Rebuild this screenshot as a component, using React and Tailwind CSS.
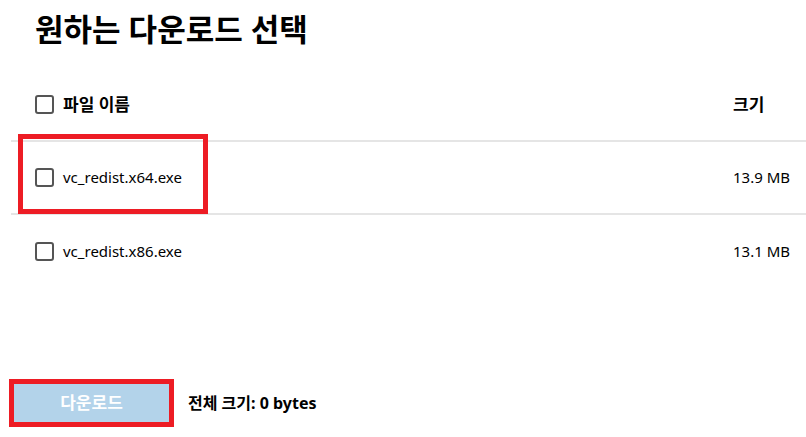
import * as React from "react";

function Box() {
  return (
    <span className="block w-[19px] h-[19px] border-2 border-[#555555] rounded-[3px] bg-white shrink-0" />
  );
}

export default function App() {
  const files = [
    { name: "vc_redist.x64.exe", size: "13.9 MB", marked: true },
    { name: "vc_redist.x86.exe", size: "13.1 MB", marked: false },
  ];

  return (
    <div
      className="relative w-[806px] h-[437px] bg-white text-black overflow-hidden"
      style={{ fontFamily: '"Noto Sans", "Noto Sans CJK KR", sans-serif' }}
    >
      <h1 className="pl-[35px] mt-[12px] h-[34px] text-[31px] leading-[34px] font-bold">
        원하는 다운로드 선택
      </h1>

      <div className="ml-[11px] mt-[23px]">
        {/* header */}
        <div className="grid grid-cols-[1fr_73px] h-[73px] items-center border-b-2 border-[#e5e5e5]">
          <div className="flex items-center gap-[9px] pl-[24px]">
            <Box />
            <span className="text-[17px] font-bold">파일 이름</span>
          </div>
          <span className="text-[17px] font-bold">크기</span>
        </div>

        {/* file rows */}
        {files.map((f, i) => (
          <div
            key={i}
            className={
              "relative grid grid-cols-[1fr_73px] h-[73px] items-center " +
              (i === 0 ? "border-b-2 border-[#e5e5e5]" : "")
            }
          >
            <div className="flex items-center gap-[9px] pl-[24px]">
              <Box />
              <span className="text-[15px]">{f.name}</span>
            </div>
            <span className="text-[15px]">{f.size}</span>
            {f.marked && (
              <div className="absolute left-[7px] top-[-8px] w-[190px] h-[80px] border-[5px] border-[#ed1c24]" />
            )}
          </div>
        ))}
      </div>

      <div className="flex items-center mt-[96px] pl-[14px]">
        <div className="relative">
          <button className="w-[155px] h-[38px] bg-[#b3d3ea] text-white text-[17px] font-bold">
            다운로드
          </button>
          <div className="absolute -left-[5px] -top-[5px] w-[165px] h-[48px] border-[5px] border-[#ed1c24]" />
        </div>
        <span className="ml-[19px] text-[16px] font-bold">전체 크기: 0 bytes</span>
      </div>
    </div>
  );
}
